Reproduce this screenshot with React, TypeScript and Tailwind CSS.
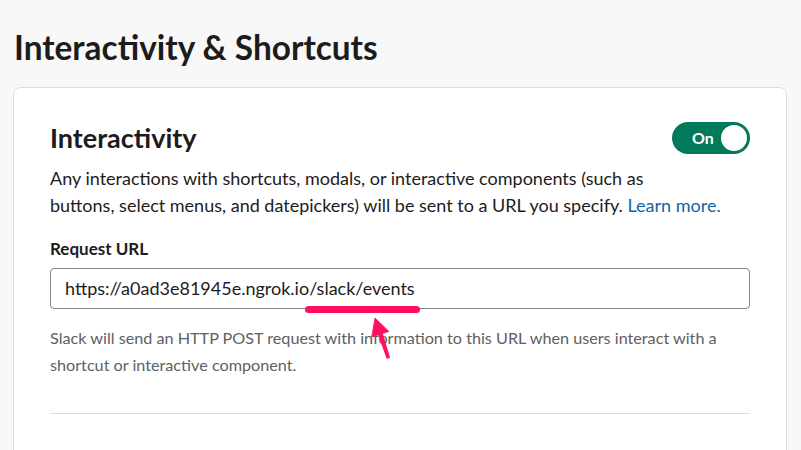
import React from "react";

export default function App() {
  return (
    <div
      className="min-h-[450px] w-[801px] overflow-hidden bg-[#f8f8f8] pl-[13px] pt-[25px] text-[#1d1c1d]"
      style={{ fontFamily: "Lato, 'Noto Sans', sans-serif" }}
    >
      <h1 className="ml-[1px] text-[33.4px] font-bold leading-[44px] text-[#1d1c1d]">
        Interactivity &amp; Shortcuts
      </h1>
      <div className="mt-[18px] w-[774px] h-[400px] rounded-[8px] border border-[#dddddd] bg-white px-[36px] pt-[33px]">
        <div className="flex items-center justify-between">
          <h2 className="text-[27px] font-bold leading-[34px]">Interactivity</h2>
          <div className="flex h-[32px] w-[78px] items-center justify-between rounded-full bg-[#007a5a] pl-[20px] pr-[3px]">
            <span className="text-[16px] font-bold text-white">On</span>
            <span className="h-[26px] w-[26px] rounded-full bg-white" />
          </div>
        </div>
        <p className="mt-[10px] text-[18px] leading-[27px]">
          Any interactions with shortcuts, modals, or interactive components (such as
          <br />
          buttons, select menus, and datepickers) will be sent to a URL you specify.{" "}
          <span className="text-[#1264a3]">Learn more.</span>
        </p>
        <div className="mt-[18px] text-[17px] font-bold leading-[24px]">Request URL</div>
        <div className="relative mt-[7px]">
          <div className="flex h-[41px] items-center rounded-[4px] border border-[#868686] px-[14px] text-[18px]">
            https://a0ad3e81945e.ngrok.io/slack/events
          </div>
          <div className="absolute left-[255px] top-[38px] h-[7px] w-[115px] rounded-full bg-[#ff0f5c]" />
          <svg
            className="absolute left-[310px] top-[48px]"
            width="40"
            height="46"
            viewBox="0 0 40 46"
          >
            <path
              d="M15 2 L28.9 15.4 L22.4 17.6 L29.6 41.5 L27 42.5 L18.4 18.8 L11.7 21 Z"
              fill="#ff0f5c"
              stroke="#ff0f5c"
              strokeWidth="0.8"
              strokeLinejoin="round"
            />
          </svg>
        </div>
        <p className="mt-[15px] text-[16.2px] leading-[27px] text-[#616061]">
          Slack will send an HTTP POST request with information to this URL when users interact with a
          <br />
          shortcut or interactive component.
        </p>
        <div className="mt-[35px] h-px bg-[#dddddd]" />
      </div>
    </div>
  );
}
